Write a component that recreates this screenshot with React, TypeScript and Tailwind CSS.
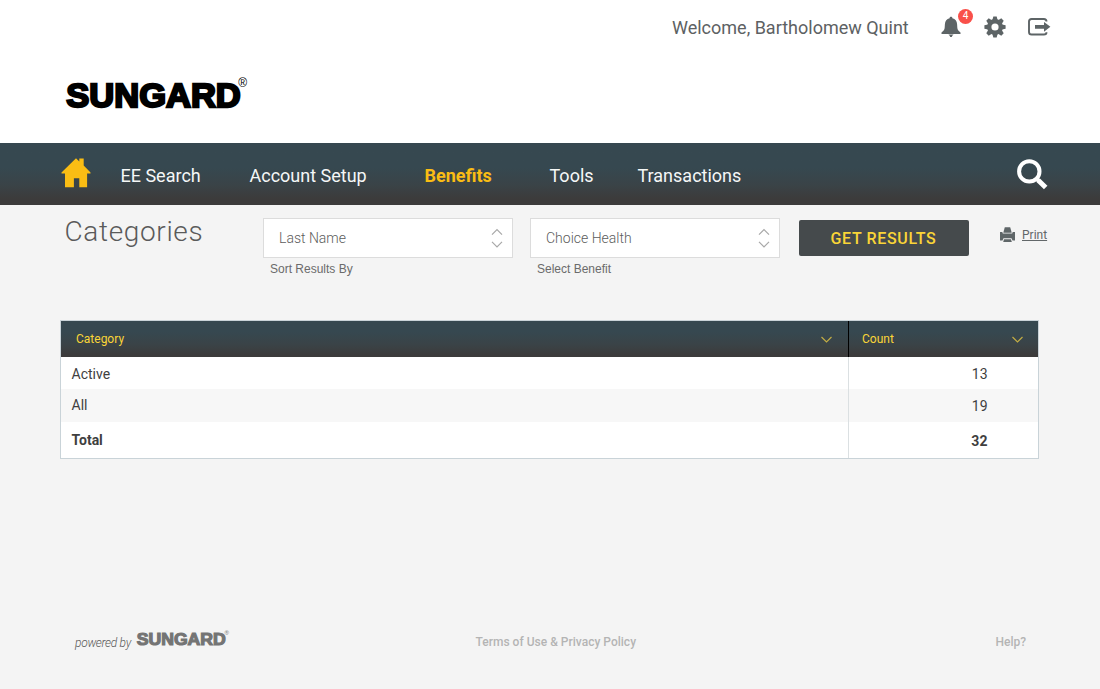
import React from "react";

const navItems = [
  { label: "EE Search", box: "w-[129px]" },
  { label: "Account Setup", box: "w-[175px]" },
  { label: "Benefits", box: "w-[125px]", active: true },
  { label: "Tools", box: "w-[88px]" },
  { label: "Transactions", box: "w-[379px]" },
];

const rows = [
  { name: "Active", count: 13, box: "h-8 bg-white", pad: "pt-0.5" },
  { name: "All", count: 19, box: "h-[33px] bg-[#f7f7f7]", pad: "" },
  { name: "Total", count: 32, box: "h-9 bg-white font-bold", pad: "" },
];

function Logo({ className }: { className: string }) {
  return (
    <svg className={`overflow-visible ${className}`} viewBox="0 0 186 44" fill="currentColor" stroke="currentColor">
      <text x="1.300" y="36.200" fontFamily="Liberation Sans, sans-serif" fontWeight="700" fontSize="33.500" strokeWidth="2.300" textLength="174.500" lengthAdjust="spacingAndGlyphs">
        SUNGARD
      </text>
      <text x="173.200" y="16.200" fontFamily="Liberation Sans, sans-serif" fontSize="12" stroke="none">
        ®
      </text>
    </svg>
  );
}

function Bell() {
  return (
    <svg className="h-[22px] w-5" viewBox="0 0 20 22" fill="#5d6466">
      <path d="M10 .8c.9 0 1.4.6 1.4 1.4 2.9.7 4.5 2.9 4.7 6l.2 3.4c.1 2 1.1 3.4 3.2 5v1.3H.5v-1.3c2.1-1.6 3.1-3 3.2-5l.2-3.4c.2-3.1 1.8-5.3 4.7-6 0-.8.5-1.4 1.4-1.4z" />
      <path d="M7.4 18.4h5.2l-1.3 1.4-.5 1.2H9.2l-.5-1.2z" />
    </svg>
  );
}

function Gear() {
  return (
    <svg className="h-[22px] w-[22px]" viewBox="-11 -11 22 22" fill="#5d6466">
      {[0, 45, 90, 135].map((a) => (
        <path key={a} transform={`rotate(${a})`} d="M-2.6-7 -1.7-10.6H1.7L2.6-7V7L1.7 10.6H-1.7L-2.6 7z" />
      ))}
      <circle r="7.9" />
      <circle r="3.6" fill="#fff" />
    </svg>
  );
}

function Exit() {
  return (
    <svg className="h-[18px] w-[23px]" viewBox="0 0 23 18" fill="none" stroke="#5d6466">
      <path d="M18.5 3.600Q18.5 1 15.9 1H3.6Q1 1 1 3.6v10.3q0 2.6 2.6 2.6h12.3q2.6 0 2.600-2.300" strokeWidth="1.900" />
      <path d="M7 6.900h9V3.900L22.4 8.8 16 13.700v-3H7z" fill="#5d6466" stroke="none" />
    </svg>
  );
}

function Home() {
  return (
    <svg className="h-[30px] w-[30px]" viewBox="0 0 30 30" fill="#fabd14">
      <path d="M15 .3l3.3 3.2V.4h4.4v7.2l6.800 6.800v1h-3.400V29.200h-7.800v-9h-5.400v9H4V15.400H.5v-1z" />
    </svg>
  );
}

function Search() {
  return (
    <svg className="h-[31px] w-[31px]" viewBox="0 0 31 31" fill="none" stroke="#fff">
      <circle cx="12.300" cy="12.400" r="10.200" strokeWidth="4" />
      <path d="M19.400 19.500l2.500 2.500" strokeWidth="4" />
      <path d="M21.200 21.300l7.500 7.200" strokeWidth="5" />
    </svg>
  );
}

function Printer() {
  return (
    <svg className="h-4 w-[15px]" viewBox="0 0 15 16" fill="#5f6668">
      <path d="M4.800.200h5.400l1.500 5.600H3.300z" />
      <path d="M0 4.900h2.300l.5 1.500h9.400l.5-1.500H15v8.600h-2.500l-1-2.300h-8l-1 2.300H0z" />
      <path d="M4 12.200h7l.8 2.900H3.200z" />
    </svg>
  );
}

function Select({ value, hint }: { value: string; hint: string }) {
  return (
    <div className="w-[250px]">
      <button className="flex h-10 w-full items-center justify-between border border-[#dcdcdc] bg-white pr-[9px] pl-[15px]">
        <span className="text-[14px] font-light text-[#5c5c5c]">{value}</span>
        <svg className="h-[20px] w-[12px]" viewBox="0 0 12 20" fill="none" stroke="#a8a8a8" strokeWidth="1.200">
          <path d="M1 6.700l5-5 5 5M1 13.800l5 5 5-5" />
        </svg>
      </button>
      <div className="pt-[3px] pl-[7px] font-['Liberation_Sans',sans-serif] text-[12px] leading-4 text-[#6b6b6b]">{hint}</div>
    </div>
  );
}

function Chevron() {
  return (
    <svg className="h-[7px] w-[11px]" viewBox="0 0 11 7" fill="none" stroke="#c2ac45" strokeWidth="1.200">
      <path d="M.5 1l5 5 5-5" />
    </svg>
  );
}

export default function App() {
  return (
    <div className="flex h-[689px] w-[1100px] flex-col overflow-hidden bg-[#f4f4f4] font-[Roboto,sans-serif]">
      <header className="h-[143px] bg-white">
        <div className="flex h-14 justify-end pr-[49.500px]">
          <span className="w-[269px] pt-[14px] text-[18px] leading-7 whitespace-nowrap text-[#5d6163]">Welcome, Bartholomew Quint</span>
          <div className="relative mt-4 w-[43px]">
            <Bell />
            <span className="absolute -top-[7.500px] left-[17px] flex h-[15px] w-[15px] items-center justify-center rounded-full bg-[#f9504a] text-[10px] leading-none text-white">4</span>
          </div>
          <div className="mt-4 w-[43.500px]"><Gear /></div>
          <div className="mt-[18px]"><Exit /></div>
        </div>
        <div className="pt-[15px] pl-[65px]">
          <Logo className="h-[44px] w-[186px] text-black" />
        </div>
      </header>

      <nav className="flex h-[62px] items-center bg-linear-to-b from-[#364850] from-40% via-[#3a4347] via-68% to-[#3c3b3b] to-90% pl-[61px]">
        <div className="-mt-[3px] w-[59.500px]"><Home /></div>
        {navItems.map((n) => (
          <a key={n.label} className={`${n.box} pt-[3px] text-[18px] leading-6 ${n.active ? "font-bold text-[#fabd14]" : "text-[#f5f7f7]"}`}>
            {n.label}
          </a>
        ))}
        <Search />
      </nav>

      <section className="flex h-[115px] pl-[64.500px]">
        <h1 className="w-[198.500px] pt-[9px] text-[28px] leading-9 font-light tracking-[0.650px] text-[#5a5a5a]">Categories</h1>
        <div className="flex gap-[17px] pt-[13px]">
          <Select value="Last Name" hint="Sort Results By" />
          <Select value="Choice Health" hint="Select Benefit" />
        </div>
        <button className="mt-[15px] ml-[19px] h-9 w-[170px] rounded-[2px] bg-[#454a4c] pt-px pr-px text-[16px] font-medium tracking-[0.650px] text-[#fad537]">
          GET RESULTS
        </button>
        <div className="mt-[22px] ml-[31px] flex h-4 items-center gap-[7px]">
          <Printer />
          <a className="text-[12px] leading-4 text-[#626769] underline">Print</a>
        </div>
      </section>

      <div className="mx-[60px] w-[979px] border border-[#c9d3d8]">
        <div className="flex h-9 bg-linear-to-b from-[#364850] from-30% via-[#3a4347] via-65% to-[#3c3b3b] to-95% text-[12px] text-[#fad537]">
          <div className="flex w-[787px] items-center justify-between pr-4 pl-[15px]">
            Category
            <Chevron />
          </div>
          <div className="flex grow items-center justify-between border-l border-black pr-[15.500px] pl-[13px]">
            Count
            <Chevron />
          </div>
        </div>
        {rows.map((r) => (
          <div key={r.name} className={`flex text-[14px] text-[#3f3f3f] ${r.box}`}>
            <div className={`flex w-[787px] items-center pl-[10.500px] ${r.pad}`}>{r.name}</div>
            <div className="flex grow items-center justify-end border-l border-[#dbe0e2] pt-[2px] pr-[50.200px] tracking-[0.2px]">{r.count}</div>
          </div>
        ))}
      </div>

      <footer className="mt-auto flex h-[60px] pl-[75px] leading-4">
        <span className="w-[61px] pt-[6px] text-[12px] font-light tracking-[-0.300px] whitespace-nowrap text-[#5a5a5a] italic">powered by</span>
        <Logo className="-mt-[2px] h-[22.500px] w-[95px] text-[#747474]" />
        <span className="ml-[244.500px] w-[520px] pt-[5px] text-[12px] font-medium tracking-[0.010px] text-[#b4b4b4]">Terms of Use &amp; Privacy Policy</span>
        <span className="pt-[5px] text-[12px] font-medium text-[#b4b4b4]">Help?</span>
      </footer>
    </div>
  );
}
